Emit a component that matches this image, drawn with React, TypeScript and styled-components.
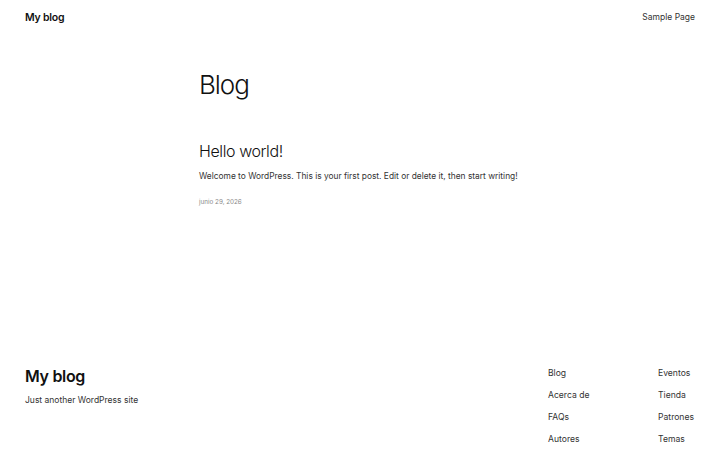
import styled, { createGlobalStyle } from 'styled-components'

const GlobalStyle = createGlobalStyle`
  html, body {
    margin: 0;
    padding: 0;
    background: #ffffff;
  }
  body {
    font-family: Inter, 'Noto Sans', 'Liberation Sans', sans-serif;
    color: #111111;
    -webkit-font-smoothing: antialiased;
  }
`

const Page = styled.div`
  min-height: 450px;
  display: flex;
  flex-direction: column;
`

const Header = styled.header`
  height: 34px;
  padding: 0 25px;
  display: flex;
  align-items: center;
  justify-content: space-between;
`

const SiteTitle = styled.a<{ $size: number }>`
  font-size: ${p => p.$size}px;
  font-weight: 600;
  letter-spacing: -0.02em;
  color: #111111;
  text-decoration: none;
`

const HeaderNav = styled.nav`
  font-size: 8.5px;
  font-weight: 400;
  color: #333333;
`

const Main = styled.main`
  flex: 1;
  width: 322px;
  margin: 0 auto;
  padding-top: 35px;
`

const PageTitle = styled.h1`
  margin: 0;
  font-size: 26px;
  font-weight: 300;
  line-height: 1.2;
  letter-spacing: -0.04em;
`

const Post = styled.article`
  margin-top: 42px;
`

const PostTitle = styled.h2`
  margin: 0;
  font-size: 16px;
  font-weight: 300;
  line-height: 1.2;
  letter-spacing: -0.025em;
`

const Excerpt = styled.p`
  margin: 10px 0 0;
  font-size: 8.4px;
  line-height: 1.4;
  color: #333333;
  white-space: nowrap;
`

const PostDate = styled.time`
  display: block;
  margin-top: 15px;
  font-size: 6.3px;
  color: #888888;
`

const Footer = styled.footer`
  padding: 0 25px 0;
  display: flex;
  justify-content: space-between;
  align-items: flex-start;
`

const Brand = styled.div`
  margin-top: 4px;
  display: flex;
  flex-direction: column;
  gap: 9px;
`

const Tagline = styled.p`
  margin: 0;
  font-size: 8.5px;
  color: #333333;
`

const FooterNav = styled.nav`
  display: grid;
  grid-template-columns: 110px auto;
  margin-right: 1px;
`

const LinkColumn = styled.ul`
  list-style: none;
  margin: 0;
  padding: 0;
  display: flex;
  flex-direction: column;
`

const FooterLink = styled.li`
  font-size: 8.6px;
  line-height: 22px;
  color: #333333;
`

const columns = [
  ['Blog', 'Acerca de', 'FAQs', 'Autores'],
  ['Eventos', 'Tienda', 'Patrones', 'Temas'],
]

export default function App() {
  return (
    <Page>
      <GlobalStyle />
      <Header>
        <SiteTitle $size={10.5}>My blog</SiteTitle>
        <HeaderNav>Sample Page</HeaderNav>
      </Header>
      <Main>
        <PageTitle>Blog</PageTitle>
        <Post>
          <PostTitle>Hello world!</PostTitle>
          <Excerpt>Welcome to WordPress. This is your first post. Edit or delete it, then start writing!</Excerpt>
          <PostDate>junio 29, 2026</PostDate>
        </Post>
      </Main>
      <Footer>
        <Brand>
          <SiteTitle $size={16}>My blog</SiteTitle>
          <Tagline>Just another WordPress site</Tagline>
        </Brand>
        <FooterNav>
          {columns.map((col, i) => (
            <LinkColumn key={i}>
              {col.map(link => (
                <FooterLink key={link}>{link}</FooterLink>
              ))}
            </LinkColumn>
          ))}
        </FooterNav>
      </Footer>
    </Page>
  )
}
